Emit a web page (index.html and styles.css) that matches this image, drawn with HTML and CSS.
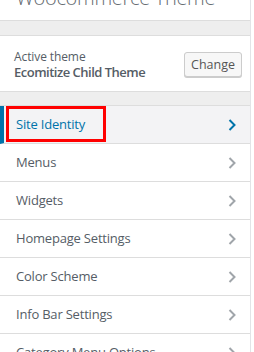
FILE: index.html
```html
<!DOCTYPE html>
<html>
<head>
<meta charset="utf-8">
<link rel="stylesheet" href="styles.css">
</head>
<body>
<div class="sidebar">
  <div class="title-area">
    <div class="title">Woocommerce Theme</div>
  </div>
  <div class="gap"></div>
  <div class="theme">
    <div class="theme-info">
      <div class="theme-label">Active theme</div>
      <div class="theme-name">Ecomitize Child Theme</div>
    </div>
    <button class="change">Change</button>
  </div>
  <div class="gap gap2"></div>
  <ul class="menu">
    <li class="item active"><span class="label">Site Identity</span><svg class="chev" width="8" height="12" viewBox="0 0 8 12"><polyline points="1.5,1 6.5,6 1.5,11" fill="none" stroke="currentColor" stroke-width="2"/></svg></li>
    <li class="item"><span class="label">Menus</span><svg class="chev" width="8" height="12" viewBox="0 0 8 12"><polyline points="1.5,1 6.5,6 1.5,11" fill="none" stroke="currentColor" stroke-width="2"/></svg></li>
    <li class="item"><span class="label">Widgets</span><svg class="chev" width="8" height="12" viewBox="0 0 8 12"><polyline points="1.5,1 6.5,6 1.5,11" fill="none" stroke="currentColor" stroke-width="2"/></svg></li>
    <li class="item"><span class="label">Homepage Settings</span><svg class="chev" width="8" height="12" viewBox="0 0 8 12"><polyline points="1.5,1 6.5,6 1.5,11" fill="none" stroke="currentColor" stroke-width="2"/></svg></li>
    <li class="item"><span class="label">Color Scheme</span><svg class="chev" width="8" height="12" viewBox="0 0 8 12"><polyline points="1.5,1 6.5,6 1.5,11" fill="none" stroke="currentColor" stroke-width="2"/></svg></li>
    <li class="item"><span class="label">Info Bar Settings</span><svg class="chev" width="8" height="12" viewBox="0 0 8 12"><polyline points="1.5,1 6.5,6 1.5,11" fill="none" stroke="currentColor" stroke-width="2"/></svg></li>
    <li class="item"><span class="label">Category Menu Options</span><svg class="chev" width="8" height="12" viewBox="0 0 8 12"><polyline points="1.5,1 6.5,6 1.5,11" fill="none" stroke="currentColor" stroke-width="2"/></svg></li>
  </ul>
</div>
</body>
</html>
```
FILE: styles.css
```css
html, body {
  margin: 0;
  padding: 0;
  background: #ffffff;
  overflow: hidden;
}
body {
  font-family: "Open Sans", "Noto Sans", sans-serif;
  color: #555d66;
}
.sidebar {
  width: 250px;
  border-right: 1px solid #e2e4e7;
  background: #eeeeee;
  height: 352px;
  overflow: hidden;
}
.title-area {
  background: #ffffff;
  height: 20px;
  border-bottom: 1px solid #dddddd;
  position: relative;
  overflow: hidden;
}
.title {
  position: absolute;
  left: 16px;
  bottom: 9px;
  font-size: 20px;
  line-height: 27px;
  font-weight: 300;
  color: #666c72;
  white-space: nowrap;
  letter-spacing: -0.3px;
}
.gap {
  height: 14px;
  background: #eeeeee;
}
.gap2 {
  height: 13px;
}
.theme {
  background: #ffffff;
  border-top: 1px solid #dddddd;
  border-bottom: 1px solid #dddddd;
  height: 55px;
  display: flex;
  align-items: center;
  justify-content: space-between;
  padding: 0 8px 0 14px;
}
.theme-info {
  display: flex;
  flex-direction: column;
  margin-top: 2px;
}
.theme-label {
  font-size: 12px;
  line-height: 15px;
  color: #555d66;
  letter-spacing: -0.1px;
}
.theme-name {
  font-size: 13px;
  line-height: 17px;
  font-weight: 600;
  color: #555d66;
  letter-spacing: -0.5px;
}
.change {
  font-family: inherit;
  font-size: 12.5px;
  color: #555555;
  background: #f7f7f7;
  border: 1px solid #cccccc;
  border-radius: 3px;
  box-shadow: 0 1px 0 #cccccc;
  width: 58px;
  height: 25px;
  padding: 0;
  margin-top: 1px;
}
.menu {
  list-style: none;
  margin: 0;
  padding: 0;
  border-top: 1px solid #dddddd;
}
.item {
  height: 37px;
  border-bottom: 1px solid #dddddd;
  background: #ffffff;
  display: flex;
  align-items: center;
  justify-content: space-between;
  padding: 0 14px 0 16px;
  font-size: 13px;
  letter-spacing: -0.2px;
  color: #555d66;
  position: relative;
}
.item .label {
  margin-top: -1px;
}
.item .chev {
  color: #a0a5aa;
}
.item.active {
  background: #f3f3f5;
  color: #0073aa;
  border-left: 4px solid #0073aa;
  padding-left: 12px;
}
.item.active .chev {
  color: #0073aa;
}
.item.active::after {
  content: "";
  position: absolute;
  left: 2px;
  top: 0;
  width: 94px;
  height: 30px;
  border: 3px solid #ff0000;
}
```
